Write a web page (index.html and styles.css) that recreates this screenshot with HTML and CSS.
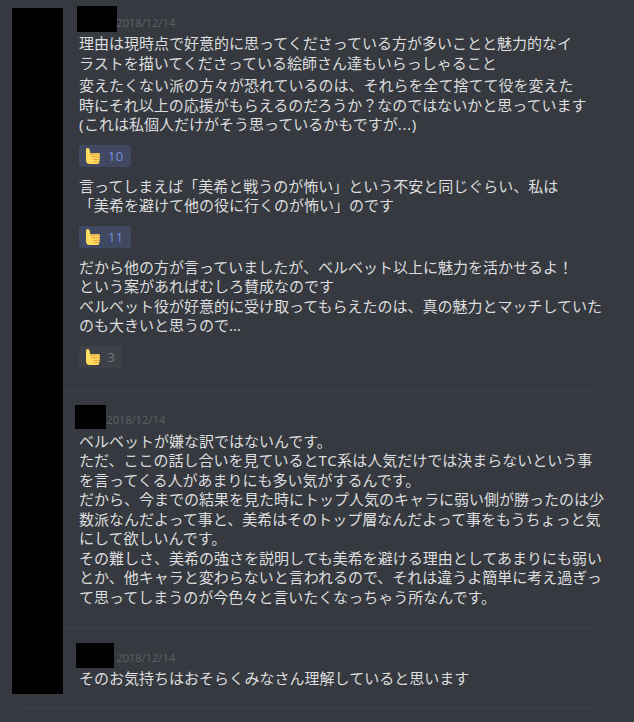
FILE: index.html
```html
<!DOCTYPE html>
<html lang="ja">
<head>
  <meta charset="UTF-8">
  <title>Chat</title>
  <link rel="stylesheet" href="styles.css">
</head>
<body>
  <svg class="hidden" width="0" height="0">
    <symbol id="thumb" viewBox="0 0 16 18">
      <path fill="#ffdc5d" d="M1 3C1 1.500 1.800.9 2.700.9S4.600 1.600 4.700 3L5.200 6.200l8.500-.3c1.200 0 1.500 1.200 1 2 .3 2.800 0 5.600-.6 7.700-.3 1-.9 1.500-2 1.500H4.500C2.200 17.100 1 15.500 1 13z"/>
      <path fill="none" stroke="#e5983f" stroke-width=".9" d="M6.500 7.300l7.500-.2M8 9.800h6.500M8 12.300h6.200M8.500 14.800h5.200M6.500 7.300c-.5 1.300.2 2.500 1.500 2.500"/>
    </symbol>
  </svg>

  <div class="avatar-bar"></div>

  <div class="group">
    <div class="header">
      <span class="name name-1"></span>
      <span class="date">2018/12/14</span>
    </div>
    <div class="message">
      <p>理由は現時点で好意的に思ってくださっている方が多いことと魅力的なイ</p>
      <p>ラストを描いてくださっている絵師さん達もいらっしゃること</p>
    </div>
    <div class="message">
      <p>変えたくない派の方々が恐れているのは、それらを全て捨てて役を変えた</p>
      <p>時にそれ以上の応援がもらえるのだろうか？なのではないかと思っています</p>
      <p><span class="latin">(</span>これは私個人だけがそう思っているかもですが<span class="latin">...)</span></p>
    </div>
    <div class="reaction active">
      <svg class="emoji"><use href="#thumb"/></svg>
      <span class="count">10</span>
    </div>
    <div class="message">
      <p>言ってしまえば「美希と戦うのが怖い」という不安と同じぐらい、私は</p>
      <p>「美希を避けて他の役に行くのが怖い」のです</p>
    </div>
    <div class="reaction active">
      <svg class="emoji"><use href="#thumb"/></svg>
      <span class="count">11</span>
    </div>
    <div class="message">
      <p>だから他の方が言っていましたが、ベルベット以上に魅力を活かせるよ！</p>
      <p>という案があればむしろ賛成なのです</p>
      <p>ベルベット役が好意的に受け取ってもらえたのは、真の魅力とマッチしていた</p>
      <p>のも大きいと思うので...</p>
    </div>
    <div class="reaction">
      <svg class="emoji"><use href="#thumb"/></svg>
      <span class="count">3</span>
    </div>
  </div>

  <div class="group">
    <div class="header">
      <span class="name name-2"></span>
      <span class="date">2018/12/14</span>
    </div>
    <div class="message">
      <p>ベルベットが嫌な訳ではないんです。</p>
      <p>ただ、ここの話し合いを見ていると<span class="latin">TC</span>系は人気だけでは決まらないという事</p>
      <p>を言ってくる人があまりにも多い気がするんです。</p>
      <p>だから、今までの結果を見た時にトップ人気のキャラに弱い側が勝ったのは少</p>
      <p>数派なんだよって事と、美希はそのトップ層なんだよって事をもうちょっと気</p>
      <p>にして欲しいんです。</p>
      <p>その難しさ、美希の強さを説明しても美希を避ける理由としてあまりにも弱い</p>
      <p>とか、他キャラと変わらないと言われるので、それは違うよ簡単に考え過ぎっ</p>
      <p>て思ってしまうのが今色々と言いたくなっちゃう所なんです。</p>
    </div>
  </div>

  <div class="group">
    <div class="header">
      <span class="name name-3"></span>
      <span class="date">2018/12/14</span>
    </div>
    <div class="message">
      <p>そのお気持ちはおそらくみなさん理解していると思います</p>
    </div>
  </div>
</body>
</html>
```

FILE: styles.css
```css
body {
  position: relative;
  margin: 0;
  height: 722px;
  overflow: hidden;
  background-color: #36393f;
  color: #dcddde;
  font-family: "Noto Sans", "Noto Sans CJK JP", sans-serif;
  font-size: 15px;
}

.hidden {
  position: absolute;
}

/* covers the avatar column */
.avatar-bar {
  position: absolute;
  left: 12px;
  top: 8px;
  width: 51px;
  height: 686px;
  background-color: #000;
}

.group {
  box-sizing: border-box;
  height: 237px;
  margin: 0 39px 0 19px;
  padding: 14px 0 0 60px;
  border-bottom: 1px solid #3f4248;
}

.avatar-bar + .group {
  height: 391px;
  padding-top: 6px;
}

.group:last-child {
  height: 81px;
  padding-top: 15px;
}

.header {
  display: flex;
  height: 26.5px;
}

.avatar-bar + .group .header {
  height: 28px;
}

.group:last-child .header {
  height: 25.5px;
}

.name {
  background-color: #000;
}

.name-1 {
  width: 40px;
  height: 26px;
  margin: 0 -1px 0 -2px;
}

.name-2 {
  width: 31px;
  height: 24px;
  margin-left: -4px;
}

.name-3 {
  width: 38px;
  height: 25px;
  margin: 0 2px 0 -3px;
}

.date {
  margin-top: 7px;
  font-size: 11.5px;
  letter-spacing: -0.2px;
  line-height: 16px;
  color: #5b5e63;
}

.avatar-bar + .group .date {
  margin-top: 9px;
}

.message {
  margin-bottom: 3px;
}

.message p {
  margin: 0;
  height: 19.5px;
  line-height: 19.5px;
  white-space: nowrap;
}

.latin {
  letter-spacing: 0.6px;
}

.reaction {
  display: flex;
  align-items: center;
  box-sizing: border-box;
  width: 43px;
  height: 22px;
  margin: 10px 0;
  padding: 0 6px;
  border-radius: 3px;
  background-color: #3d4046;
  color: #72767d;
  font-family: "Open Sans", sans-serif;
  font-size: 13.5px;
  font-weight: 500;
}

.reaction.active {
  width: 52px;
  background-color: #414962;
  color: #7289da;
}

.emoji {
  width: 16px;
  height: 18px;
}

.count {
  flex: 1;
  margin-left: 5px;
  text-align: center;
}
```
